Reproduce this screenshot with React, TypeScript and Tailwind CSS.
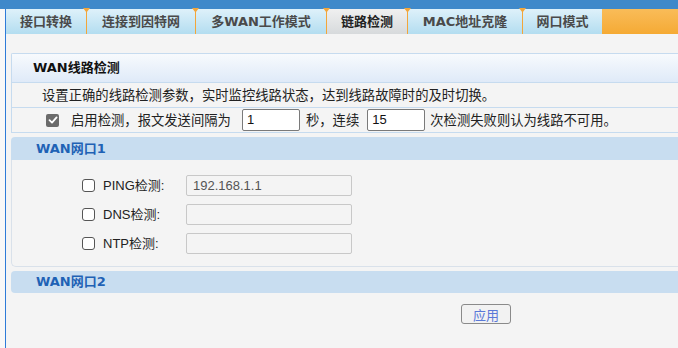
import React from "react";

const CJK = '"Noto Sans CJK SC", sans-serif';
const HEAD = '"DejaVu Sans", "Noto Sans CJK SC", sans-serif';
const BODY = '"Liberation Sans", "Noto Sans CJK SC", sans-serif';

function Sep() {
  return (
    <div className="relative w-px h-full bg-[#f3a63a]">
      <svg className="absolute -top-px -left-[3px]" width="7" height="5" viewBox="0 0 7 5">
        <polygon points="0,0 7,0 3.5,4.5" fill="#f3a63a" />
      </svg>
    </div>
  );
}

function Tab({ label, w, active }: { label: string; w: string; active?: boolean }) {
  return (
    <div
      className={`${w} h-full flex items-center justify-center text-[13px] font-bold ${
        active
          ? "bg-gradient-to-b from-[#f0f0f0] to-[#d7dadc] text-[#222]"
          : "bg-gradient-to-b from-[#def1fa] to-[#b3ddf0] text-[#4a4a4a]"
      }`}
      style={{ fontFamily: HEAD }}
    >
      {label}
    </div>
  );
}

function CheckRow({ label, value }: { label: string; value?: string }) {
  return (
    <div className="flex items-center h-[21px]">
      <div className="ml-[70px] w-[13px] h-[13px] rounded-[3px] border border-[#555] bg-white" />
      <div className="ml-[8px] w-[83px] text-[13px] text-[#222]" style={{ fontFamily: BODY }}>
        {label}
      </div>
      <div
        className="w-[166px] h-[21px] border border-[#c8c8c8] rounded-[2px] bg-[#f4f4f4] flex items-center pl-[6px] text-[13px] text-[#555]"
        style={{ fontFamily: BODY }}
      >
        {value}
      </div>
    </div>
  );
}

export default function App() {
  return (
    <div className="w-[678px] h-[348px] overflow-hidden bg-[#f4f4f4] flex flex-col" style={{ fontFamily: CJK }}>
      <div className="h-[9px] bg-[#3f89ca] shrink-0" />
      <div className="flex flex-1">
        <div className="w-[5px] bg-[#f8f8f8]" />
        <div className="w-px bg-[#2e7bd8]" />
        <div className="flex-1 flex flex-col">
          <div className="h-[25px] flex">
            <Tab label="接口转换" w="w-[80px]" />
            <Sep />
            <Tab label="连接到因特网" w="w-[108px]" />
            <Sep />
            <Tab label="多WAN工作模式" w="w-[130px]" />
            <Sep />
            <Tab label="链路检测" w="w-[80px]" active />
            <Sep />
            <Tab label="MAC地址克隆" w="w-[114px]" />
            <Sep />
            <Tab label="网口模式" w="w-[79px]" />
            <div className="flex-1 bg-gradient-to-b from-[#f9bc58] to-[#f5aa33]" />
          </div>

          <div className="pl-[5px] pt-[19px] flex flex-col">
            {/* Panel WAN线路检测 */}
            <div className="border-l border-t border-[#c6dbef] rounded-tl-[2px]">
              <div
                className="h-[29px] flex items-center pl-[21px] bg-gradient-to-b from-[#f7fafd] to-[#dfeaf8] text-[13px] font-bold text-[#111] border-b border-[#c6dbef]"
                style={{ fontFamily: HEAD }}
              >
                WAN线路检测
              </div>
              <div className="h-[25px] flex items-center pl-[30px] text-[13.33px] text-[#222] border-b border-[#c6dbef]">
                设置正确的线路检测参数，实时监控线路状态，达到线路故障时的及时切换。
              </div>
              <div className="h-[25px] flex items-center text-[13.33px] text-[#222] border-b border-[#c6dbef]">
                <div className="ml-[34px] w-[13px] h-[13px] rounded-[2px] bg-[#6a6a6a] flex items-center justify-center">
                  <svg width="10" height="10" viewBox="0 0 10 10">
                    <path d="M1.5 5.2 L4 7.6 L8.6 2.4" stroke="#fff" strokeWidth="1.8" fill="none" strokeLinecap="round" strokeLinejoin="round" />
                  </svg>
                </div>
                <span className="ml-[12px]">启用检测，报文发送间隔为</span>
                <div
                  className="ml-[11px] w-[58px] h-[22px] border border-[#7a7a7a] rounded-[2px] bg-white flex items-center pl-[4px] text-[13px] text-[#111]"
                  style={{ fontFamily: BODY }}
                >
                  1
                </div>
                <span className="ml-[6px]">秒，连续</span>
                <div
                  className="ml-[8px] w-[58px] h-[22px] border border-[#7a7a7a] rounded-[2px] bg-white flex items-center pl-[4px] text-[13px] text-[#111]"
                  style={{ fontFamily: BODY }}
                >
                  15
                </div>
                <span className="ml-[5px]">次检测失败则认为线路不可用。</span>
              </div>
            </div>

            {/* WAN网口1 */}
            <div
              className="mt-[4px] h-[23px] flex items-center pl-[25px] bg-[#c8ddf0] rounded-tl-[4px] text-[13px] font-bold text-[#1f62b5]"
              style={{ fontFamily: HEAD }}
            >
              WAN网口1
            </div>
            <div className="h-[107px] border-l border-b border-[#d9e1ea] rounded-bl-[5px] pt-[15px] flex flex-col gap-[8px]">
              <CheckRow label="PING检测:" value="192.168.1.1" />
              <CheckRow label="DNS检测:" />
              <CheckRow label="NTP检测:" />
            </div>

            {/* WAN网口2 */}
            <div
              className="mt-[4px] h-[22px] flex items-center pl-[25px] bg-[#c8ddf0] rounded-l-[4px] text-[13px] font-bold text-[#1f62b5]"
              style={{ fontFamily: HEAD }}
            >
              WAN网口2
            </div>

            <div className="mt-[11px] pl-[450px]">
              <button className="w-[50px] h-[20px] border border-[#8a8a8a] rounded-[3px] bg-[#f2f2f2] text-[13px] text-[#5a78d8] flex items-center justify-center leading-none">
                应用
              </button>
            </div>
          </div>
        </div>
      </div>
    </div>
  );
}
